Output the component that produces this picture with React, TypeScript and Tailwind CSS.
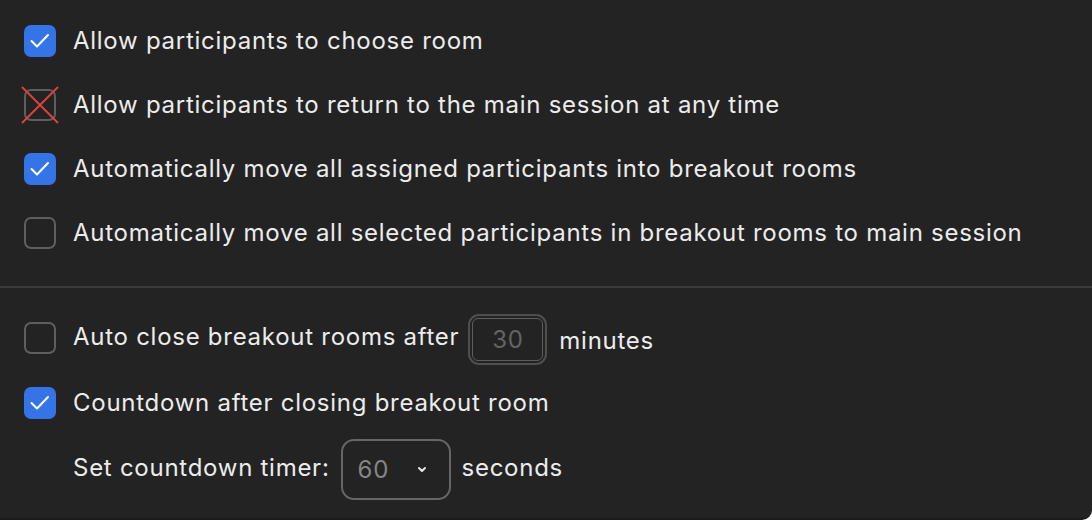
import React from "react";

function Box({ checked, crossed, className = "" }: { checked?: boolean; crossed?: boolean; className?: string }) {
  return (
    <div className={"relative w-8 h-8 shrink-0 " + className}>
      {checked ? (
        <div className="w-8 h-8 rounded-[7px] bg-[#3574e6]">
          <svg width="32" height="32" viewBox="0 0 32 32" fill="none">
            <path d="M7.5 16 L13 21.5 L24 10" stroke="white" strokeWidth="2" strokeLinecap="round" strokeLinejoin="round" />
          </svg>
        </div>
      ) : (
        <div className="w-8 h-8 rounded-[7px] border-2 border-[#5e5e5e]" />
      )}
      {crossed && (
        <svg className="absolute -left-[3px] -top-[3px]" width="38" height="38" viewBox="0 0 38 38">
          <path d="M1 1 L37 37 M37 1 L1 37" stroke="#d8423f" strokeWidth="2" />
        </svg>
      )}
    </div>
  );
}

function Row({ checked, crossed, children }: { checked?: boolean; crossed?: boolean; children: React.ReactNode }) {
  return (
    <div className="flex items-center h-8 gap-[17px]">
      <Box checked={checked} crossed={crossed} />
      <span>{children}</span>
    </div>
  );
}

export default function App() {
  return (
    <div
      className="w-[1092px] h-[520px] bg-[#232323] text-[#ececec] text-[24px] tracking-[0.73px] overflow-hidden rounded-br-[10px] border-b-2 border-[#1a1a1a]"
      style={{ fontFamily: "Inter, 'Noto Sans', sans-serif" }}
    >
      <div className="flex flex-col gap-8 pl-6 pt-[25px] pb-[37px]">
        <Row checked>Allow participants to choose room</Row>
        <Row crossed>Allow participants to return to the main session at any time</Row>
        <Row checked>Automatically move all assigned participants into breakout rooms</Row>
        <Row>Automatically move all selected participants in breakout rooms to main session</Row>
      </div>
      <div className="h-[2px] bg-[#3b3b3b]" />
      <div className="flex flex-col pl-6 pt-[26px]">
        <div className="flex items-center h-[51px] gap-[17px]">
          <Box className="-mt-[3px]" />
          <span className="-mt-[5px]">Auto close breakout rooms after</span>
          <div className="-ml-[8px] w-[79px] h-[51px] rounded-[11px] border-2 border-[#4f4f52] p-[2px] flex">
            <div className="flex-1 rounded-[6px] border border-[#5d5d60] flex items-center justify-center text-[#646464]">
              30
            </div>
          </div>
          <span className="-ml-[5px] mt-[3px]">minutes</span>
        </div>
        <div className="mt-[22px]">
          <Row checked>Countdown after closing breakout room</Row>
        </div>
        <div className="flex items-center mt-[20px] pl-[49px] gap-[11px]">
          <span className="-mt-[3px]">Set countdown timer:</span>
          <div className="w-[110px] h-[61px] rounded-[13px] border-2 border-[#666666] flex items-center justify-between pl-[15px] pr-[21px]">
            <span className="text-[#858585]">60</span>
            <svg width="12" height="8" viewBox="0 0 12 8" fill="none">
              <path d="M3 2 L6 5 L9 2" stroke="#e6e6e6" strokeWidth="2" strokeLinecap="round" strokeLinejoin="round" />
            </svg>
          </div>
          <span className="-mt-[3px]">seconds</span>
        </div>
      </div>
    </div>
  );
}
